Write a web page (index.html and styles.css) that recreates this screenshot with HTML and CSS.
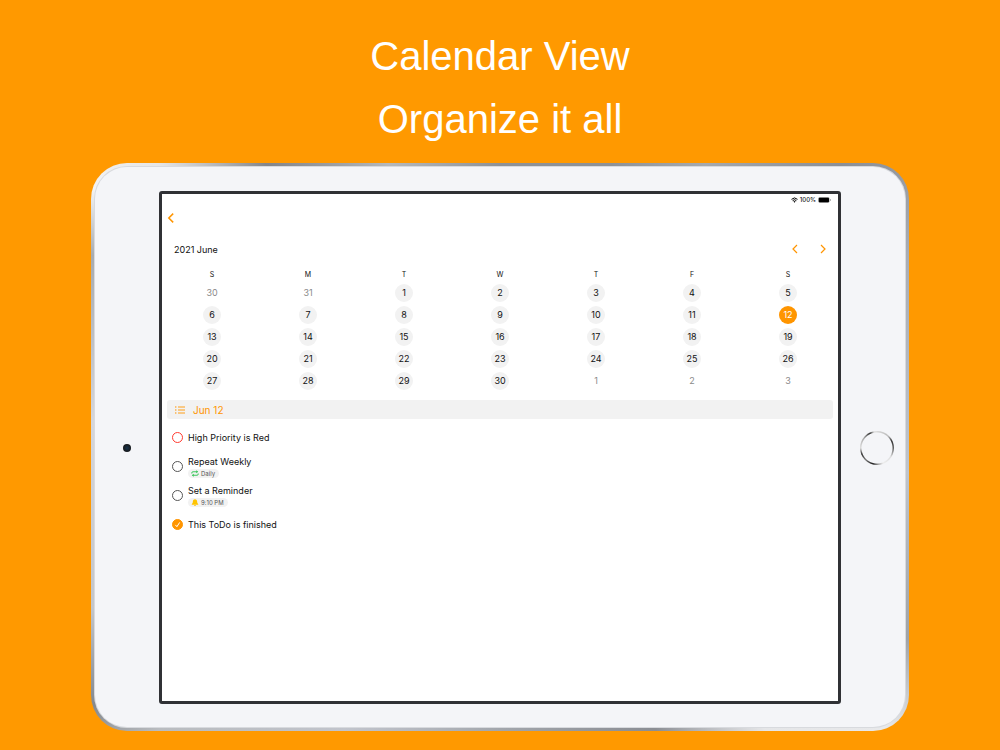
FILE: index.html
```html
<!DOCTYPE html>
<html lang="en">
<head>
<meta charset="utf-8">
<title>Calendar View</title>
<link rel="stylesheet" href="styles.css">
</head>
<body>
<h1 class="headline">Calendar View<br>Organize it all</h1>
<div class="device">
  <div class="bezel">
    <span class="camera"></span>
    <main class="screen">
      <div class="status">
        <svg width="7" height="6" viewBox="0 0 14 11"><path d="M1 4.2a8.6 8.6 0 0 1 12 0M3.3 6.8a5.2 5.2 0 0 1 7.4 0" fill="none" stroke="#000" stroke-width="2"/><path d="M4.9 8.6a3 3 0 0 1 4.2 0L7 10.8z"/></svg>
        <span>100%</span>
        <svg width="13" height="6" viewBox="0 0 13 6"><rect x=".3" y=".3" width="11.2" height="5.4" rx="1.4" fill="#999"/><rect x=".8" y=".8" width="10.2" height="4.4" rx=".9"/><path d="M12 2v2q.8-.3.8-1T12 2" fill="#777"/></svg>
      </div>
      <nav class="topnav">
        <button class="icon-button" aria-label="Back"><svg width="8" height="12" viewBox="0 0 8 12"><path d="M6.2 1.6 1.8 6l4.4 4.4"/></svg></button>
      </nav>
      <div class="month">
        <h2 class="month-name">2021 June</h2>
        <div class="month-buttons">
          <button class="icon-button thin" aria-label="Previous month"><svg width="8" height="12" viewBox="0 0 8 12"><path d="M6 2 2 6l4 4"/></svg></button>
          <button class="icon-button thin" aria-label="Next month"><svg width="8" height="12" viewBox="0 0 8 12"><path d="m2 2 4 4-4 4"/></svg></button>
        </div>
      </div>
      <table class="calendar">
        <thead><tr><th>S</th><th>M</th><th>T</th><th>W</th><th>T</th><th>F</th><th>S</th></tr></thead>
        <tbody>
          <tr><td><button class="day other">30</button></td><td><button class="day other">31</button></td><td><button class="day">1</button></td><td><button class="day">2</button></td><td><button class="day">3</button></td><td><button class="day">4</button></td><td><button class="day">5</button></td></tr>
          <tr><td><button class="day">6</button></td><td><button class="day">7</button></td><td><button class="day">8</button></td><td><button class="day">9</button></td><td><button class="day">10</button></td><td><button class="day">11</button></td><td><button class="day selected">12</button></td></tr>
          <tr><td><button class="day">13</button></td><td><button class="day">14</button></td><td><button class="day">15</button></td><td><button class="day">16</button></td><td><button class="day">17</button></td><td><button class="day">18</button></td><td><button class="day">19</button></td></tr>
          <tr><td><button class="day">20</button></td><td><button class="day">21</button></td><td><button class="day">22</button></td><td><button class="day">23</button></td><td><button class="day">24</button></td><td><button class="day">25</button></td><td><button class="day">26</button></td></tr>
          <tr><td><button class="day">27</button></td><td><button class="day">28</button></td><td><button class="day">29</button></td><td><button class="day">30</button></td><td><button class="day other">1</button></td><td><button class="day other">2</button></td><td><button class="day other">3</button></td></tr>
        </tbody>
      </table>
      <h3 class="date-bar">
        <svg width="10" height="8" viewBox="0 0 10 8"><path d="M3 1h7M3 4h7M3 7h7" stroke="#ff9500" stroke-width=".9"/><g fill="#ff9500"><circle cx=".8" cy="1" r=".7"/><circle cx=".8" cy="4" r=".7"/><circle cx=".8" cy="7" r=".7"/></g></svg>
        Jun 12
      </h3>
      <ul class="tasks">
        <li class="task"><input class="check high" type="checkbox" id="t1"><div class="task-text"><label for="t1">High Priority is Red</label></div></li>
        <li class="task"><input class="check" type="checkbox" id="t2"><div class="task-text"><label for="t2">Repeat Weekly</label>
          <span class="tag"><svg width="8" height="7" viewBox="0 0 16 14"><path d="M1.500 7V6q0-2.500 2.500-2.500h7M14.500 7v1q0 2.500-2.500 2.500H5" fill="none" stroke="#27c24c" stroke-width="1.800"/><path d="M10.500.5v6l4-3zM5.500 7.500v6l-4-3z" fill="#27c24c"/></svg>Daily</span></div></li>
        <li class="task"><input class="check" type="checkbox" id="t3"><div class="task-text"><label for="t3">Set a Reminder</label>
          <span class="tag"><svg width="8" height="7" viewBox="0 0 16 14"><path d="M8 .3c3 0 4.300 2 4.300 4.700 0 3 .7 3.500 2.200 5.500v.8h-13v-.8C3 8.500 3.700 8 3.700 5 3.700 2.300 5 .3 8 .3M6 12h4q-.4 1.800-2 1.800T6 12" fill="#ffc400"/></svg>9:10 PM</span></div></li>
        <li class="task"><span class="done"><input class="check" type="checkbox" id="t4" checked><svg class="tick" width="11" height="11" viewBox="0 0 11 11"><path d="m3.400 5.900 1.500 1.800 2.800-4.300" fill="none" stroke="#fff" stroke-width="1"/></svg></span><div class="task-text"><label for="t4">This ToDo is finished</label></div></li>
      </ul>
    </main>
    <button class="home" aria-label="Home"></button>
  </div>
</div>
</body>
</html>
```
FILE: styles.css
```css
* { box-sizing: border-box; }
body {
  margin: 0;
  padding: 25px 91px 19px;
  background: #ff9900;
  color: #111;
  font-family: Inter, "Liberation Sans", sans-serif;
}
button { padding: 0; border: 0; background: none; font: inherit; color: inherit; }
svg { display: block; flex: none; }
.headline {
  margin: 0 0 12px;
  color: #fff;
  font: 400 40px/63px "Liberation Sans", sans-serif;
  text-align: center;
}
.device {
  padding: 4px;
  border-radius: 36px;
  background: conic-gradient(from 0deg, #8d9196 0 6%, #a5a9ae 10%, #8b8f96 14%, #a9adb5 18%, #bfc4cc 26%, #a0a3a7 32%, #e8e9eb 35%, #e5e6e8 38%, #8b8e94 42%, #a2a6ac 50%, #c1c4cc 58%, #b9bcc0 64%, #85898e 66%, #c4c5c8 69%, #d6d6da 76%, #a9abad 82%, #f4f4f4 84%, #e6e6e7 86%, #838589 89%, #b5b8bb 94%, #8d9196);
}
.bezel {
  display: grid;
  grid-template-columns: 64px 1fr 64px;
  align-items: center;
  justify-items: center;
  padding: 24px 0 23px;
  border-radius: 32px;
  background: #f4f5f8;
  box-shadow: 0 0 0 1px #d8dade;
}
.camera {
  width: 8px;
  height: 8px;
  border-radius: 50%;
  background: radial-gradient(#17334c, #171b20 60%);
}
.home {
  width: 34px;
  height: 34px;
  margin-left: 7px;
  border-radius: 50%;
  background: radial-gradient(#f4f5f8 15px, transparent 16px), conic-gradient(#d8d8d8, #bbb 12%, #333 18%, #666 26%, #ddd 34%, #eee 44%, #999 49%, #222 54%, #777 62%, #333 69%, #ddd 75%, #ccc 79%, #aaa 85%, #333 93%, #ddd 97%);
}
.screen {
  width: 100%;
  aspect-ratio: 682 / 513;
  border: 3px solid #303135;
  border-radius: 3px;
  background: #fff;
}
.status {
  display: flex;
  align-items: center;
  justify-content: flex-end;
  gap: 2px;
  height: 11px;
  padding-right: 7px;
  font-size: 6px;
  font-weight: 500;
}
.topnav { display: flex; align-items: center; height: 25px; padding-left: 5px; }
.icon-button path { fill: none; stroke: #ff9500; stroke-width: 1.5; }
.thin path { stroke-width: 1.200; }
.month {
  display: flex;
  align-items: center;
  justify-content: space-between;
  height: 38px;
  padding: 0 11px 0 12px;
}
.month-name { margin: 0; font-size: 9px; font-weight: 400; }
.month-buttons { display: flex; gap: 20px; }
.calendar { width: calc(100% - 4px); margin: 0 2px; border-collapse: collapse; table-layout: fixed; }
.calendar th { height: 14px; padding: 0; font-size: 7px; line-height: 14px; font-weight: 400; }
.calendar td { height: 22px; padding: 2px 0; text-align: center; }
.day {
  display: block;
  width: 18px;
  height: 18px;
  margin: 0 auto;
  border-radius: 50%;
  background: #f2f2f2;
  font-size: 9px;
  line-height: 18px;
}
.other { background: none; color: #8a8a8a; }
.selected { background: #ff9500; color: #fff; }
.date-bar {
  display: flex;
  align-items: center;
  gap: 8px;
  height: 19px;
  margin: 8px 5px 4px;
  padding-left: 8px;
  border-radius: 3px;
  background: #f2f2f2;
  color: #ff9500;
  font-size: 10px;
  font-weight: 400;
}
.tasks { margin: 0; padding: 0 10px; list-style: none; }
.task { display: flex; align-items: center; gap: 5px; height: 29px; }
.check {
  appearance: none;
  width: 11px;
  height: 11px;
  margin: 0;
  border: 1px solid #555;
  border-radius: 50%;
  display: block;
}
.high { border-color: #ff3b30; }
.check:checked { border-color: #ff9500; background: #ff9500; }
.done { position: relative; }
.tick { position: absolute; inset: 0; pointer-events: none; }
.task-text { display: flex; flex-direction: column; align-items: flex-start; font-size: 9px; line-height: 12px; }
.tag {
  display: flex;
  align-items: center;
  gap: 2px;
  height: 9px;
  margin-top: 1px;
  padding: 0 4px 0 3px;
  border-radius: 5px;
  background: #f2f2f2;
  color: #555;
  font-size: 6px;
  line-height: 9px;
}
```
